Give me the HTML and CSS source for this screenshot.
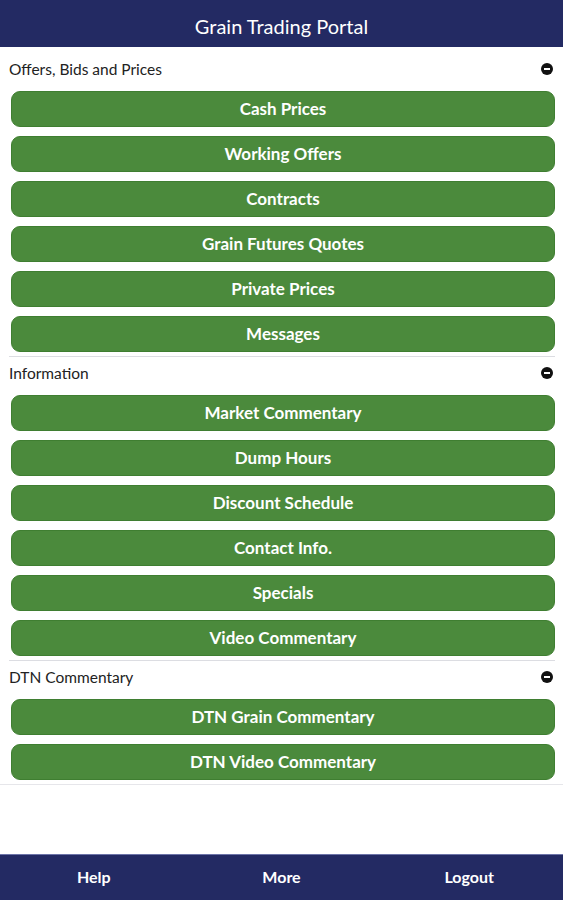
FILE: index.html
```html
<!DOCTYPE html>
<html lang="en">
<head>
  <meta charset="UTF-8" />
  <meta name="viewport" content="width=device-width, initial-scale=1.0"/>
  <title>Grain Trading Portal</title>
  <link rel="stylesheet" href="styles.css">
</head>
<body>
  <header class="topbar">Grain Trading Portal</header>

  <main class="menu">
    <section class="group">
      <div class="group-head">
        <span>Offers, Bids and Prices</span>
        <span class="collapse"></span>
      </div>
      <div class="group-list">
        <a class="btn">Cash Prices</a>
        <a class="btn">Working Offers</a>
        <a class="btn">Contracts</a>
        <a class="btn">Grain Futures Quotes</a>
        <a class="btn">Private Prices</a>
        <a class="btn">Messages</a>
      </div>
    </section>

    <section class="group">
      <div class="group-head">
        <span>Information</span>
        <span class="collapse"></span>
      </div>
      <div class="group-list">
        <a class="btn">Market Commentary</a>
        <a class="btn">Dump Hours</a>
        <a class="btn">Discount Schedule</a>
        <a class="btn">Contact Info.</a>
        <a class="btn">Specials</a>
        <a class="btn">Video Commentary</a>
      </div>
    </section>

    <section class="group group-last">
      <div class="group-head">
        <span>DTN Commentary</span>
        <span class="collapse"></span>
      </div>
      <div class="group-list">
        <a class="btn">DTN Grain Commentary</a>
        <a class="btn">DTN Video Commentary</a>
      </div>
    </section>
  </main>

  <footer class="tabbar">
    <a>Help</a>
    <a>More</a>
    <a>Logout</a>
  </footer>
</body>
</html>
```

FILE: styles.css
```css
body {
  font-family: Lato, 'Liberation Sans', sans-serif;
  background: #fff;
  margin: 0;
  padding: 0;
  color: #222;
  height: 900px;
  display: flex;
  flex-direction: column;
}

.topbar {
  background-color: #232a63;
  color: white;
  height: 47px;
  line-height: 53px;
  text-align: center;
  font-size: 20px;
  overflow: hidden;
}

.menu {
  flex: 1;
  padding-top: 6px;
}

.group {
  margin: 0 8px 0 9px;
  border-bottom: 1px solid #dcdde2;
}

.group-last {
  margin: 0;
  border-bottom-color: #e6e6ea;
}

.group-last .group-head {
  padding: 0 8px 0 9px;
}

.group-last .group-list {
  padding: 6px 8px 4px 11px;
}

.group-head {
  display: flex;
  align-items: center;
  justify-content: space-between;
  height: 32px;
  font-size: 15.5px;
}

.collapse {
  position: relative;
  width: 12px;
  height: 12px;
  border-radius: 50%;
  background: #111;
  margin-right: 2px;
}

.collapse::after {
  content: "";
  position: absolute;
  left: 3px;
  right: 3px;
  top: 5px;
  height: 2px;
  background: #fff;
}

.group-list {
  display: flex;
  flex-direction: column;
  gap: 9px;
  padding: 6px 0 4px 2px;
}

.btn {
  display: block;
  height: 34px;
  line-height: 34px;
  background-color: #4b8a3c;
  border: 1px solid #3f7e31;
  border-radius: 9px;
  color: white;
  text-align: center;
  font-size: 17px;
  font-weight: bold;
}

.tabbar {
  height: 46px;
  padding-bottom: 3px;
  box-sizing: border-box;
  background-color: #232a63;
  border-top: 1px solid #6d74a8;
  display: grid;
  grid-template-columns: 1fr 1fr 1fr;
  align-items: center;
}

.tabbar a {
  color: white;
  text-align: center;
  font-size: 16px;
  font-weight: bold;
}
```
